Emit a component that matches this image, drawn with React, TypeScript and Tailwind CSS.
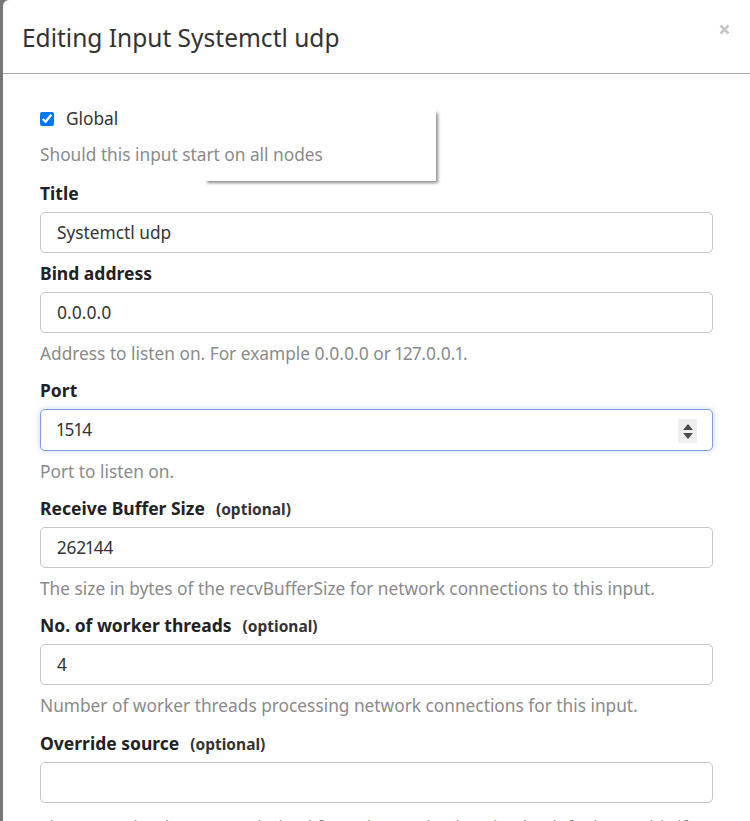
import React from "react";

const font = { fontFamily: '"Noto Sans", "Open Sans", Arial, sans-serif' };

function Label({ text, optional }: { text: string; optional?: boolean }) {
  return (
    <div className="h-[22px] leading-[22px] mb-[8px] text-[17.5px] font-bold text-[#222] whitespace-nowrap">
      {text}
      {optional && <span className="ml-[11px] text-[15.5px] font-bold text-[#333]">(optional)</span>}
    </div>
  );
}

function Input({ value, focused, spinner }: { value: string; focused?: boolean; spinner?: boolean }) {
  return (
    <div
      className={
        "relative rounded-[5px] border bg-white flex items-center pl-[16px] text-[17.3px] text-[#333] proportional-nums " +
        (focused
          ? "h-[42px] border-[#7f9ee0] shadow-[0_0_6px_rgba(110,140,230,0.35)]"
          : "h-[41px] border-[#c6c6c6]")
      }
    >
      {value}
      {spinner && (
        <div className="absolute right-[15px] top-[9px] w-[19px] h-[24px] bg-[#efefef] flex flex-col items-center justify-center gap-[3px]">
          <svg width="10" height="6" viewBox="0 0 10 6">
            <path d="M5 0 L10 6 L0 6 Z" fill="#4d4d4d" />
          </svg>
          <svg width="10" height="6" viewBox="0 0 10 6">
            <path d="M0 0 L10 0 L5 6 Z" fill="#4d4d4d" />
          </svg>
        </div>
      )}
    </div>
  );
}

function Help({ text, last }: { text: string; last?: boolean }) {
  return (
    <div
      className={
        (last ? "mt-[14px] " : "mt-[10px] ") +
        "h-[22px] leading-[22px] text-[17.3px] text-[#8a8a8a] whitespace-nowrap proportional-nums"
      }
    >
      {text}
    </div>
  );
}

export default function App() {
  return (
    <div className="w-[750px] h-[821px] overflow-hidden bg-[#777777] flex" style={font}>
      <div className="ml-[3px] flex-1 bg-white rounded-tl-[6px] relative flex flex-col">
        <div className="h-[74px] border-b border-[#a9a9a9] flex items-center justify-between pl-[19px] pr-[20px] shrink-0">
          <div className="text-[24.5px] text-[#333] leading-[32px] mt-[2px] whitespace-nowrap">Editing Input Systemctl udp</div>
          <svg width="11" height="11" viewBox="0 0 11 11" className="mt-[-14px]">
            <path d="M1.5 1.5 L9.5 9.5 M9.5 1.5 L1.5 9.5" stroke="#c6c6c6" strokeWidth="2.6" />
          </svg>
        </div>
        <div className="pt-[34px] pl-[37px] pr-[37px] relative">
          <div className="absolute left-[200px] top-[35px] w-[233px] h-[72px] shadow-[3px_3px_3px_-1px_rgba(0,0,0,0.45)]" />
          <div className="flex items-center h-[22px] leading-[22px] text-[17.3px] text-[#333]">
            <input
              type="checkbox"
              checked
              readOnly
              className="w-[14px] h-[14px] m-0 accent-[#0075ff]"
            />
            <span className="ml-[12px]">Global</span>
          </div>
          <div className="mt-[14px] h-[22px] leading-[22px] text-[17.3px] text-[#8a8a8a] whitespace-nowrap">
            Should this input start on all nodes
          </div>

          <div className="mt-[16px]">
            <Label text="Title" />
            <Input value="Systemctl udp" />
          </div>

          <div className="mt-[9px]">
            <Label text="Bind address" />
            <Input value="0.0.0.0" />
            <Help text="Address to listen on. For example 0.0.0.0 or 127.0.0.1." />
          </div>

          <div className="mt-[14px]">
            <Label text="Port" />
            <Input value="1514" focused spinner />
            <Help text="Port to listen on." />
          </div>

          <div className="mt-[14px]">
            <Label text="Receive Buffer Size" optional />
            <Input value="262144" />
            <Help text="The size in bytes of the recvBufferSize for network connections to this input." />
          </div>

          <div className="mt-[14px]">
            <Label text="No. of worker threads" optional />
            <Input value="4" />
            <Help text="Number of worker threads processing network connections for this input." />
          </div>

          <div className="mt-[15px]">
            <Label text="Override source" optional />
            <Input value="" />
            <Help last text="The source is a hostname derived from the received packet by default. Set this if" />
          </div>
        </div>
      </div>
    </div>
  );
}
